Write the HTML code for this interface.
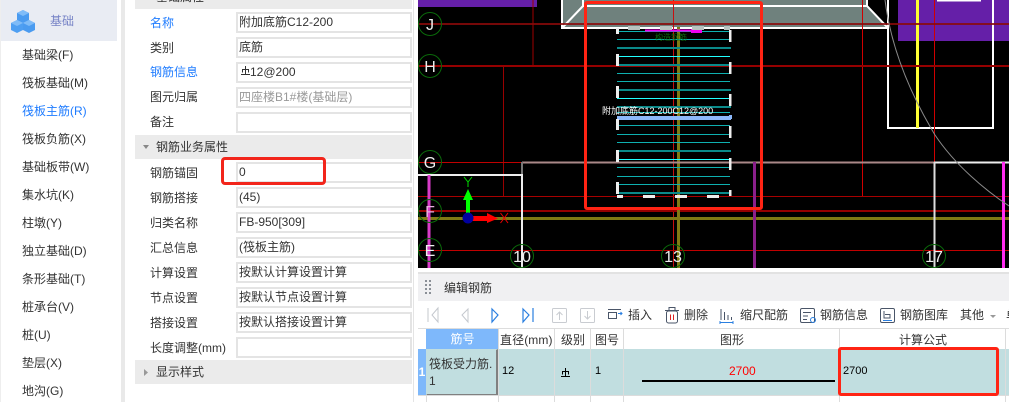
<!DOCTYPE html>
<html lang="zh"><head><meta charset="utf-8"><title>编辑钢筋</title>
<style>
html,body{margin:0;padding:0;width:1009px;height:402px;overflow:hidden;background:#fff}
body{position:relative;font:12px/16px "Liberation Sans","Noto Sans CJK SC",sans-serif;color:#333}
.a{position:absolute}
.t{position:absolute;white-space:nowrap;line-height:16px}
.s{left:22px}
.l{left:150px}
.i{position:absolute;left:236px;width:171px;height:17px;border:2px solid #e4e4e4;background:#fff;padding-left:1px;line-height:17px;white-space:nowrap}
.sec{position:absolute;left:135px;width:277px;background:#ebebeb}
.b{color:#1f7cff}
svg{position:absolute;left:0;top:0}
svg text{font-family:"Liberation Sans","Noto Sans CJK SC",sans-serif}
</style></head><body>
<div class="a" style="left:0;top:0;width:1px;height:402px;background:#eee"></div>
<div class="a" style="left:1px;top:0;width:116px;height:41px;background:#e9ecf3"></div>
<div class="a" style="left:121px;top:0;width:4px;height:402px;background:#e9e9e9"></div>
<svg width="60" height="41" style="left:0;top:0">
<g fill="#4a9bf0"><path d="M23 10l6 3v7l-6 3-6-3v-7z"/><path d="M17 20l6 3v7l-6 3-6-3v-7z" fill="#4e9ff2"/><path d="M29 20l6 3v7l-6 3-6-3v-7z"/></g>
<g fill="#7fbcf8"><path d="M23 10l6 3-6 3-6-3z"/><path d="M17 20l6 3-6 3-6-3z"/><path d="M29 20l6 3-6 3-6-3z"/></g>
</svg>
<div class="t" style="left:50px;top:13px;color:#7683c6">基础</div>
<div class="t s" style="top:47px">基础梁(F)</div>
<div class="t s" style="top:75px">筏板基础(M)</div>
<div class="t s b" style="top:103px">筏板主筋(R)</div>
<div class="t s" style="top:131px">筏板负筋(X)</div>
<div class="t s" style="top:159px">基础板带(W)</div>
<div class="t s" style="top:187px">集水坑(K)</div>
<div class="t s" style="top:215px">柱墩(Y)</div>
<div class="t s" style="top:243px">独立基础(D)</div>
<div class="t s" style="top:271px">条形基础(T)</div>
<div class="t s" style="top:299px">桩承台(V)</div>
<div class="t s" style="top:327px">桩(U)</div>
<div class="t s" style="top:355px">垫层(X)</div>
<div class="t s" style="top:383px">地沟(G)</div>

<div class="sec" style="top:0;height:9px"></div>
<div class="t" style="left:156px;top:-11px">基础属性</div>
<div class="sec" style="top:135px;height:24px"></div>
<div class="sec" style="top:360px;height:24px"></div>
<div class="a" style="left:413px;top:0;width:1px;height:402px;background:#e4e4e4"></div>
<svg width="20" height="402" style="left:138px"><path d="M5 145h6l-3 4z" fill="#888"/><path d="M6 369v7l4-3.500z" fill="#999"/></svg>
<div class="t" style="left:156px;top:139px">钢筋业务属性</div>
<div class="t" style="left:156px;top:364px">显示样式</div>

<div class="t l b" style="top:15px">名称</div>
<div class="t l" style="top:40px">类别</div>
<div class="t l b" style="top:64px">钢筋信息</div>
<div class="t l" style="top:89px">图元归属</div>
<div class="t l" style="top:114px">备注</div>
<div class="t l" style="top:165px">钢筋锚固</div>
<div class="t l" style="top:190px">钢筋搭接</div>
<div class="t l" style="top:215px">归类名称</div>
<div class="t l" style="top:240px">汇总信息</div>
<div class="t l" style="top:265px">计算设置</div>
<div class="t l" style="top:290px">节点设置</div>
<div class="t l" style="top:315px">搭接设置</div>
<div class="t l" style="top:340px">长度调整(mm)</div>

<div class="i" style="top:12px">附加底筋C12-200</div>
<div class="i" style="top:37px">底筋</div>
<div class="i" style="top:62px;padding-left:12px;width:160px">12@200</div>
<div class="i" style="top:87px;color:#999">四座楼B1#楼(基础层)</div>
<div class="i" style="top:112px"></div>
<div class="i" style="top:162px">0</div>
<div class="i" style="top:187px">(45)</div>
<div class="i" style="top:212px">FB-950[309]</div>
<div class="i" style="top:237px">(筏板主筋)</div>
<div class="i" style="top:262px">按默认计算设置计算</div>
<div class="i" style="top:287px">按默认节点设置计算</div>
<div class="i" style="top:312px">按默认搭接设置计算</div>
<div class="i" style="top:337px"></div>
<svg width="12" height="12" style="left:240px;top:65px" fill="none" stroke="#333"><path d="M1 9.500h9M5.500 1v8.500M2.500 7.500V4.500h6v3"/></svg>

<!-- canvas -->
<svg width="591" height="268" viewBox="418 0 591 268" style="left:418px;top:0">
<rect x="418" y="0" width="591" height="268" fill="#000"/>
<rect x="418" y="0" width="119" height="7" fill="#651fa8"/>
<rect x="898" y="0" width="111" height="41" fill="#651fa8"/>
<rect x="937" y="0" width="44" height="1.500" fill="#fff"/>
<path d="M562 0H867V6L887 27V28H562Z" fill="#6f817d"/>
<path d="M562 0V28H888M867 0V6L887 27M583 0V6H867M563 27L583 6" fill="none" stroke="#fff" stroke-width="2"/>
<path d="M888 28V128H993V0M888 0V28" fill="none" stroke="#fff" stroke-width="2"/>
<rect x="916" y="0" width="3" height="128" fill="#ffff33"/>
<g fill="none" stroke-width="1">
<path d="M533 0V65" stroke="#a00000"/>
<path d="M503.500 66V196" stroke="#900"/>
<path d="M862.500 0V196" stroke="#d00000"/>
<path d="M934.500 0V162" stroke="#d00000"/>
<path d="M673.500 0V268" stroke="#c81010"/>
<path d="M418 162.500H522" stroke="#c00000"/>
<path d="M418 196.500H1009" stroke="#a80000"/>
<path d="M418 250.500H1009" stroke="#c00000"/>
</g>
<path d="M418 24H1009" stroke="#8a0a0a" stroke-width="2" opacity=".85"/>
<path d="M418 66H1009" stroke="#960000" stroke-width="2"/>
<path d="M418 211H1009" stroke="#960000" stroke-width="2"/>
<path d="M418 218.500H1009" stroke="#807a14" stroke-width="3"/>
<path d="M678.500 27V268" stroke="#807a14" stroke-width="3"/>
<path d="M522 162.500H934" stroke="#a88" stroke-width="2"/>
<path d="M934 162.500H1009" stroke="#eee" stroke-width="2"/>
<path d="M522 162V175" stroke="#777" stroke-width="2"/>
<path d="M522 175V268M418 175H523" fill="none" stroke="#eee" stroke-width="2"/>
<path d="M934.500 162V268" stroke="#ddd" stroke-width="2"/>
<path d="M429 175V268" stroke="#d83cc8" stroke-width="3"/>
<path d="M1003.500 162V268" stroke="#ff2cf0" stroke-width="3"/>
<path d="M754.500 162V268" stroke="#8b1f8b" stroke-width="3"/>
<path d="M885 0C890 40 905 85 935 135C955 165 985 190 1009 206" fill="none" stroke="#8a8a8a" stroke-width="1"/>
<!-- rebar lines -->
<g stroke="#0eb0b0" stroke-width="1">
<path d="M617 31.500H730M617 39.500H730M617 73.500H730M617 81.500H730M617 112.500H730M617 125.500H730M617 134.500H730M617 142.500H730M617 167.500H730M617 176.500H730M617 184.500H730"/>
</g>
<g stroke="#0a8a8a" stroke-width="2"><path d="M617 48H731M617 65H730M617 90H731M617 107H731M617 151H731M617 193H730"/></g>
<g stroke="#22ffff" stroke-width="1"><path d="M617 56.500H730M617 98.500H730M617 159.500H730"/></g>
<rect x="617" y="116" width="114" height="4" fill="#8cb8fa"/>
<rect x="729" y="115" width="3" height="4" fill="#8cb8fa"/>
<path d="M645 30.500H702" stroke="#f000f0" stroke-width="2"/>
<rect x="691" y="29" width="11" height="4" fill="#f000f0"/>
<g fill="#eee">
<rect x="616" y="28" width="3" height="6"/><rect x="616" y="54" width="3" height="12"/><rect x="616" y="86" width="3" height="12"/><rect x="616" y="119" width="3" height="11"/><rect x="616" y="150" width="3" height="12"/><rect x="616" y="182" width="3" height="12"/>
<rect x="729" y="30" width="2.500" height="12"/><rect x="729" y="62" width="2.500" height="12"/><rect x="729" y="94" width="2.500" height="12"/><rect x="729" y="126" width="2.500" height="12"/><rect x="729" y="158" width="2.500" height="12"/><rect x="729" y="190" width="2.500" height="6"/>
<rect x="617" y="195" width="6" height="3"/><rect x="643" y="195" width="12" height="3"/><rect x="675" y="195" width="12" height="3"/><rect x="707" y="195" width="12" height="3"/>
</g>
<g fill="#b9c2c0"><rect x="628" y="26" width="12" height="4"/><rect x="660" y="26" width="12" height="4"/><rect x="692" y="26" width="12" height="4"/><rect x="724" y="26" width="6" height="4"/></g>
<text x="655" y="40" font-size="8" fill="#0a6a0a">构造钢筋</text>
<text x="602" y="114" font-size="9" fill="#fff">附加底筋C12-200C12@200</text>
<!-- axis circles -->
<g fill="none" stroke="#0a6a0a" stroke-width="1">
<circle cx="430" cy="24" r="11.500"/><circle cx="430" cy="66" r="11.500"/><circle cx="430" cy="162" r="11.500"/><circle cx="430" cy="211" r="11.500"/><circle cx="430" cy="250" r="11.500"/>
<circle cx="522" cy="256" r="11.500"/><circle cx="673" cy="256" r="11.500"/><circle cx="934" cy="256" r="11.500"/>
</g>
<g fill="#eee" font-size="16" text-anchor="middle">
<text x="430" y="30">J</text><text x="430" y="72">H</text><text x="430" y="168">G</text><text x="430" y="217" fill="#e8b0e0">F</text><text x="430" y="256">E</text>
<text x="522" y="262">10</text><text x="673" y="262">13</text><text x="934" y="262">17</text>
</g>
<!-- origin -->
<path d="M466 213V200H463L468 189L473 200H470V213Z" fill="#0f0"/>
<path d="M472 216H487V213L498 218.500L487 223V221H472Z" fill="#f00"/>
<circle cx="468" cy="218" r="5.500" fill="#0000a0"/>
<path d="M464 177L468 182L472 177M468 182V187" fill="none" stroke="#0d0" stroke-width="1"/>
<path d="M500.500 213L508 223M508 213L500.500 223" fill="none" stroke="#e00" stroke-width="1"/>
</svg>

<!-- red annotation on canvas and property -->
<div class="a" style="left:584px;top:1px;width:173px;height:203px;border:3px solid #ff2414;border-radius:3px"></div>
<div class="a" style="left:221px;top:157px;width:99px;height:22px;border:3px solid #f2251b;border-radius:4px"></div>

<!-- bottom panel -->
<div class="a" style="left:418px;top:272px;width:591px;height:29px;background:#f0f0f2;border-top:2px solid #e2e2e2;box-sizing:border-box"></div>
<svg width="10" height="16" style="left:424px;top:280px" fill="#8a8f96"><rect x="1" y="0" width="2" height="2"/><rect x="5" y="0" width="2" height="2"/><rect x="1" y="4" width="2" height="2"/><rect x="5" y="4" width="2" height="2"/><rect x="1" y="8" width="2" height="2"/><rect x="5" y="8" width="2" height="2"/><rect x="1" y="12" width="2" height="2"/><rect x="5" y="12" width="2" height="2"/></svg>
<div class="t" style="left:444px;top:280px">编辑钢筋</div>
<div class="a" style="left:418px;top:328px;width:591px;height:1px;background:#ddd"></div>

<!-- toolbar icons -->
<svg width="591" height="27" viewBox="418 301 591 27" style="left:418px;top:301px" fill="none">
<g stroke="#c4c8ce"><path d="M428 308V322M438 308L432 315L438 322Z"/><path d="M468 309L462 315L468 322Z"/></g>
<g stroke="#2a7fe0" stroke-width="1.200"><path d="M492 309L498 315L492 322Z"/><path d="M523 309L529 315L523 322Z M533 308V322"/></g>
<g stroke="#c9ccd1"><rect x="552.500" y="308.500" width="14" height="14" rx="1"/><path d="M559.500 320V312M556.500 315L559.500 312L562.500 315"/><rect x="580.500" y="308.500" width="14" height="14" rx="1"/><path d="M587.500 311V319M584.500 316L587.500 319L590.500 316"/></g>
<g stroke="#4a5568"><path d="M608 309.500H621"/><rect x="608.500" y="312.500" width="8" height="6"/><path d="M618 313.500H622M620.500 312L622 313.500L620.500 315" stroke="#2a7fe0"/>
<path d="M665 310.500H679M669 310V307.500H675V310"/><rect x="666.500" y="311" width="11" height="12" rx="2"/><path d="M670.500 314.500V320M673.500 314.500V320" stroke="#d22"/></g>
<g stroke="#4a5568"><path d="M721 309V320M724.500 312V320M728 315V320M731.500 317V320"/><path d="M720 322.500H733M720 321V324M733 321V324" stroke="#2a7fe0"/>
<rect x="800.500" y="308.500" width="14" height="14" rx="1.500"/><path d="M803 312.500H811M803 316H808M803 319.500H807"/><circle cx="813" cy="320" r="2.500" stroke="#2a7fe0"/>
<rect x="880.500" y="308.500" width="14" height="14" rx="1.500"/><path d="M884 311V318H890V314.500H885"/><path d="M883 320.500H892" stroke="#2a7fe0"/></g>
<path d="M990 315H996L993 318Z" fill="#999"/>
</svg>
<div class="t" style="left:628px;top:307px">插入</div>
<div class="t" style="left:684px;top:307px">删除</div>
<div class="t" style="left:740px;top:307px">缩尺配筋</div>
<div class="t" style="left:820px;top:307px">钢筋信息</div>
<div class="t" style="left:900px;top:307px">钢筋图库</div>
<div class="t" style="left:960px;top:307px">其他</div>
<div class="t" style="left:1006px;top:307px">单</div>

<!-- table -->
<div class="a" style="left:426px;top:329px;width:73px;height:20px;background:#7eb8fb;color:#fff;text-align:center;line-height:20px">筋号</div>
<div class="t" style="left:500px;top:332px;letter-spacing:.1px">直径(mm)</div>
<div class="t" style="left:561px;top:332px">级别</div>
<div class="t" style="left:595px;top:332px">图号</div>
<div class="t" style="left:720px;top:332px">图形</div>
<div class="t" style="left:899px;top:332px">计算公式</div>
<div class="a" style="left:418px;top:349px;width:591px;height:47px;background:#c1dee0"></div>
<div class="a" style="left:418px;top:349px;width:8px;height:46px;background:#7eb8fb;color:#fff;font-weight:bold;line-height:46px;text-align:center">1</div>
<div class="a" style="left:426px;top:349px;width:69px;height:44px;border:2px solid #808080;border-left:1px solid #c1dee0;border-top:1px solid #c1dee0"></div>
<div class="t" style="left:429px;top:356px">筏板受力筋.</div>
<div class="t" style="left:429px;top:373px">1</div>
<div class="a" style="left:554px;top:329px;width:1px;height:73px;background:#dcdcdc"></div>
<div class="a" style="left:498px;top:329px;width:1px;height:73px;background:#dcdcdc"></div>
<div class="a" style="left:590px;top:329px;width:1px;height:73px;background:#dcdcdc"></div>
<div class="a" style="left:623px;top:329px;width:1px;height:73px;background:#dcdcdc"></div>
<div class="a" style="left:839px;top:329px;width:1px;height:73px;background:#dcdcdc"></div>
<div class="a" style="left:1005px;top:329px;width:1px;height:73px;background:#dcdcdc"></div>
<div class="a" style="left:426px;top:395px;width:1px;height:7px;background:#dcdcdc"></div>
<div class="a" style="left:418px;top:395px;width:591px;height:1px;background:#dcdcdc"></div>
<div class="t" style="left:502px;top:363px;color:#000;font-size:11px">12</div>
<div class="t" style="left:595px;top:363px;color:#000;font-size:11px">1</div>
<svg width="12" height="12" style="left:560px;top:366px" fill="none" stroke="#000"><path d="M1 10.500h9M5.500 2v8.500M2.500 8.500V5.500h6v3"/></svg>
<div class="a" style="left:642px;top:380px;width:193px;height:2px;background:#000"></div>
<div class="t" style="left:729px;top:363px;color:#f00;font-size:12px">2700</div>
<div class="t" style="left:843px;top:363px;color:#000;font-size:11px">2700</div>
<div class="a" style="left:838px;top:347px;width:155px;height:43px;border:3px solid #ff2414;border-radius:3px"></div>
</body></html>
